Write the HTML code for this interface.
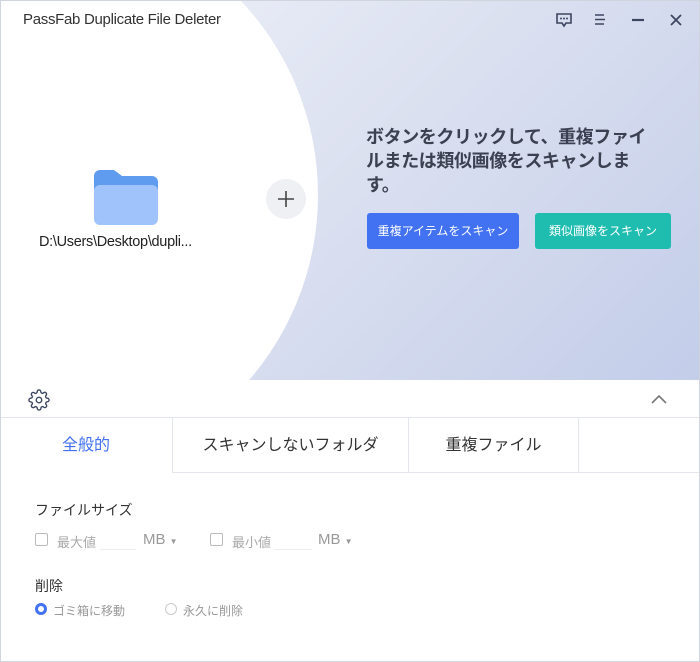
<!DOCTYPE html>
<html><head><meta charset="utf-8"><style>
*{margin:0;padding:0;box-sizing:border-box}
body{width:700px;height:662px;overflow:hidden;font-family:"Liberation Sans","Noto Sans CJK JP",sans-serif;background:#fff;position:relative}
.top{position:absolute;left:0;top:0;width:700px;height:380px;overflow:hidden;background:linear-gradient(135deg,#f1f3fa 0%,#dde2f1 45%,#c3cde9 100%)}
.circ{position:absolute;left:-248px;top:-88px;width:566px;height:566px;border-radius:50%;background:#fff}
.title{position:absolute;left:23px;top:11px;font-size:15px;color:#333;letter-spacing:-0.3px}
.ic{position:absolute;top:10px}
.folder{position:absolute;left:94px;top:170px}
.path{position:absolute;left:39px;top:234px;font-size:14.5px;color:#222;letter-spacing:-0.3px}
.plus{position:absolute;left:266px;top:179px;width:40px;height:40px;border-radius:50%;background:#eff0f4}
.head{position:absolute;left:366px;top:125px;width:330px;font-size:18px;font-weight:bold;color:#3b4150;line-height:24px;white-space:nowrap;letter-spacing:-0.4px}
.btn{position:absolute;top:213px;height:36px;border-radius:3px;color:#fff;font-size:12px;line-height:36px;text-align:center}
.bar{position:absolute;left:0;top:380px;width:700px;height:38px;border-bottom:1px solid #e3e6ec;background:#fff}
.tabs{position:absolute;left:0;top:418px;width:700px;height:55px}
.tab{position:absolute;top:0;height:55px;line-height:55px;text-align:center;font-size:16px;color:#333}
.lbl{position:absolute;font-size:14px;color:#333}
.g{position:absolute;font-size:13px;color:#aaa}
.cb{position:absolute;width:13px;height:13px;border:1px solid #bbb;border-radius:2px}
.frame{position:absolute;left:0;top:0;width:700px;height:662px;border:1px solid #d0d4dc;pointer-events:none}
</style></head><body>
<div class="top">
<div class="circ"></div>
<div class="title">PassFab Duplicate File Deleter</div>
<svg class="ic" style="left:554px" width="20" height="20" viewBox="0 0 20 20"><path d="M3 4h14v9h-5l-2 3-2-3H3z" fill="none" stroke="#3d4660" stroke-width="1.6"/><circle cx="7" cy="8.5" r="1" fill="#3d4660"/><circle cx="10" cy="8.5" r="1" fill="#3d4660"/><circle cx="13" cy="8.5" r="1" fill="#3d4660"/></svg>
<svg class="ic" style="left:590px" width="20" height="20" viewBox="0 0 20 20"><path d="M5 5h9M5 9.5h10M5 14h9" stroke="#3d4660" stroke-width="1.6"/></svg>
<svg class="ic" style="left:628px" width="20" height="20" viewBox="0 0 20 20"><path d="M4 10h12" stroke="#3d4660" stroke-width="2.2"/></svg>
<svg class="ic" style="left:666px" width="20" height="20" viewBox="0 0 20 20"><path d="M5 5l10 10M15 5L5 15" stroke="#3d4660" stroke-width="1.8"/></svg>
<svg class="folder" width="64" height="55" viewBox="0 0 64 55"><path d="M0 6a6 6 0 0 1 6-6h14l8 6h30a6 6 0 0 1 6 6v37H0z" fill="#5f9cf0"/><rect x="0" y="15" width="64" height="40" rx="6" fill="#a1c3fb"/></svg>
<div class="path">D:\Users\Desktop\dupli...</div>
<div class="plus"><svg width="40" height="40" viewBox="0 0 40 40"><path d="M20 12v16M12 20h16" stroke="#444" stroke-width="1.6"/></svg></div>
<div class="head">ボタンをクリックして、重複ファイ<br>ルまたは類似画像をスキャンしま<br>す。</div>
<div class="btn" style="left:367px;width:152px;background:#4271f2">重複アイテムをスキャン</div>
<div class="btn" style="left:535px;width:136px;background:#1fbcb0">類似画像をスキャン</div>
</div>
<div class="bar">
<svg style="position:absolute;left:28px;top:9px" width="22" height="22" viewBox="0 0 24 24"><path d="M12 15a3 3 0 1 0 0-6 3 3 0 0 0 0 6z M19.4 15a1.650 1.650 0 0 0 .33 1.82l.06.06a2 2 0 1 1-2.83 2.830l-.06-.06a1.65 1.65 0 0 0-1.820-.33 1.65 1.65 0 0 0-1 1.51V21a2 2 0 1 1-4 0v-.09A1.65 1.65 0 0 0 9 19.4a1.65 1.65 0 0 0-1.82.33l-.06.06a2 2 0 1 1-2.83-2.83l.06-.06a1.65 1.65 0 0 0 .33-1.82 1.65 1.65 0 0 0-1.51-1H3a2 2 0 1 1 0-4h.09A1.65 1.65 0 0 0 4.6 9a1.65 1.65 0 0 0-.33-1.82l-.06-.06a2 2 0 1 1 2.83-2.83l.06.06a1.65 1.65 0 0 0 1.82.33H9a1.65 1.65 0 0 0 1-1.51V3a2 2 0 1 1 4 0v.09a1.65 1.65 0 0 0 1 1.51 1.65 1.65 0 0 0 1.82-.33l.06-.06a2 2 0 1 1 2.83 2.83l-.06.06a1.65 1.65 0 0 0-.33 1.82V9a1.65 1.65 0 0 0 1.51 1H21a2 2 0 1 1 0 4h-.09a1.65 1.65 0 0 0-1.51 1z" fill="none" stroke="#3d4660" stroke-width="1.5"/></svg>
<svg style="position:absolute;left:650px;top:12px" width="18" height="14" viewBox="0 0 18 14"><path d="M2 11l7-7 7 7" fill="none" stroke="#777" stroke-width="1.6"/></svg>
</div>
<div class="tabs">
<div class="tab" style="left:0;width:172px;color:#4271f2">全般的</div>
<div class="tab" style="left:172px;width:237px;border:1px solid #e3e6ec;border-top:none">スキャンしないフォルダ</div>
<div class="tab" style="left:409px;width:170px;border-bottom:1px solid #e3e6ec;border-right:1px solid #e3e6ec">重複ファイル</div>
<div class="tab" style="left:579px;width:121px;border-bottom:1px solid #e3e6ec"></div>
</div>
<div class="lbl" style="left:35px;top:500px">ファイルサイズ</div>
<div class="cb" style="left:35px;top:533px"></div><div class="g" style="left:57px;top:532px">最大値</div>
<div style="position:absolute;left:100px;top:549px;width:36px;border-bottom:1px solid #eee"></div>
<div class="g" style="left:143px;top:531px;font-size:15px;color:#999">MB <span style="font-size:8px">▼</span></div>
<div class="cb" style="left:210px;top:533px"></div><div class="g" style="left:232px;top:532px">最小値</div>
<div style="position:absolute;left:274px;top:549px;width:38px;border-bottom:1px solid #eee"></div>
<div class="g" style="left:318px;top:531px;font-size:15px;color:#999">MB <span style="font-size:8px">▼</span></div>
<div class="lbl" style="left:35px;top:576px">削除</div>
<div style="position:absolute;left:35px;top:603px;width:12px;height:12px;border-radius:50%;border:3px solid #4271f2"></div>
<div class="g" style="left:53px;top:602px;font-size:12px;color:#999">ゴミ箱に移動</div>
<div style="position:absolute;left:165px;top:603px;width:12px;height:12px;border-radius:50%;border:1px solid #ccc"></div>
<div class="g" style="left:183px;top:602px;font-size:12px;color:#999">永久に削除</div>
<div class="frame"></div>
</body></html>
